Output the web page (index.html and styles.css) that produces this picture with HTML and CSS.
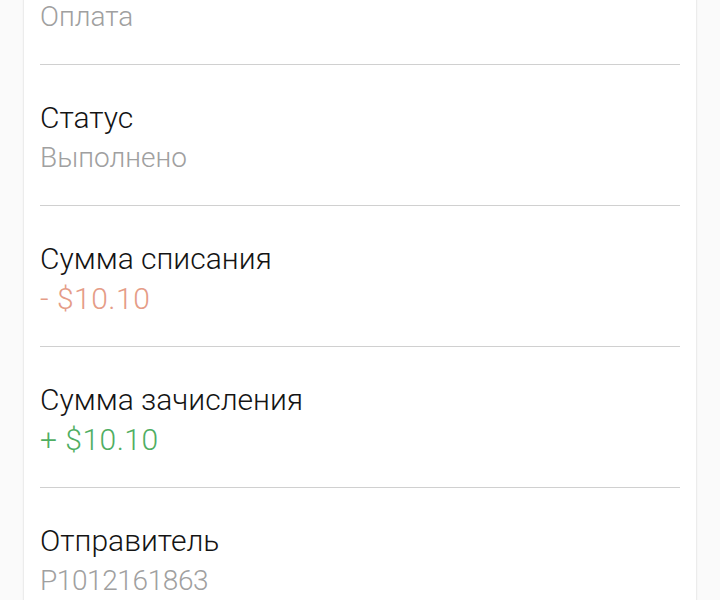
FILE: index.html
```html
<!DOCTYPE html>
<html lang="ru">
<head>
  <meta charset="UTF-8">
  <meta name="viewport" content="width=device-width, initial-scale=1.0">
  <title>Детали операции</title>
  <link rel="stylesheet" href="styles.css">
</head>
<body>

  <div class="card">
    <div class="row">
      <div class="label">Тип операции</div>
      <div class="value">Оплата</div>
    </div>
    <div class="row">
      <div class="label">Статус</div>
      <div class="value">Выполнено</div>
    </div>
    <div class="row">
      <div class="label">Сумма списания</div>
      <div class="value amount minus">- $10.10</div>
    </div>
    <div class="row">
      <div class="label">Сумма зачисления</div>
      <div class="value amount plus">+ $10.10</div>
    </div>
    <div class="row">
      <div class="label">Отправитель</div>
      <div class="value account">P1012161863</div>
    </div>
  </div>

</body>
</html>
```

FILE: styles.css
```css
html, body {
  margin: 0;
  background-color: #fafafa;
  font-family: Roboto, "Noto Sans", sans-serif;
  font-weight: 300;
  overflow: hidden;
}
.card {
  background-color: #fff;
  margin: -76px 24px 0 24px;
  padding: 0 16px;
  box-shadow: 0 0 2px rgba(0, 0, 0, 0.18);
}
.row {
  padding: 33px 0 28px 0;
  border-bottom: 1px solid #d0d0d0;
}
.row:last-child {
  border-bottom: none;
}
.label {
  font-size: 30px;
  line-height: 40px;
  color: #141414;
}
.value {
  font-size: 28px;
  line-height: 39px;
  color: #a0a0a0;
}
.amount {
  font-size: 30px;
  letter-spacing: 0.5px;
}
.account {
  letter-spacing: -0.4px;
}
.minus {
  color: #e59c87;
}
.plus {
  color: #4fae62;
}
```
